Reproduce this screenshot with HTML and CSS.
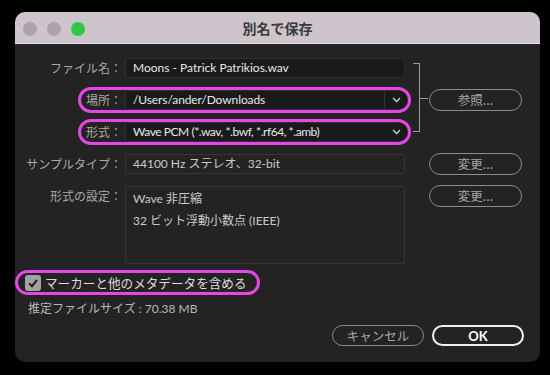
FILE: index.html
```html
<!DOCTYPE html>
<html lang="ja">
  <head>
    <meta charset="UTF-8" />
    <meta name="viewport" content="width=device-width, initial-scale=1.0" />
    <title>別名で保存</title>
    <link rel="stylesheet" href="styles.css">
  </head>
  <body>
    <div class="window">
      <div class="titlebar">
        <div class="lights">
          <span class="light"></span>
          <span class="light"></span>
          <span class="light green"></span>
        </div>
        <div class="title">別名で保存</div>
        <div></div>
      </div>
      <div class="content">
        <div class="form">
          <div class="label r1">ファイル名：</div>
          <div class="field input r1">Moons - Patrick Patrikios.wav</div>

          <div class="label r2">場所：</div>
          <div class="field select hl r2">
            <span class="value">/Users/ander/Downloads</span>
            <span class="chev split">
              <svg width="9" height="6" viewBox="0 0 9 6"><polyline points="1,1 4.5,4.5 8,1" /></svg>
            </span>
          </div>

          <div class="label r3">形式：</div>
          <div class="field select hl r3">
            <span class="value tight">Wave PCM (*.wav, *.bwf, *.rf64, *.amb)</span>
            <span class="chev">
              <svg width="9" height="6" viewBox="0 0 9 6"><polyline points="1,1 4.5,4.5 8,1" /></svg>
            </span>
          </div>

          <div class="bracket"></div>
          <button class="btn browse">参照...</button>

          <div class="label r4">サンプルタイプ：</div>
          <div class="field plain r4">44100 Hz ステレオ、32-bit</div>
          <button class="btn change1">変更...</button>

          <div class="label r5">形式の設定：</div>
          <div class="settings r5">
            <p>Wave 非圧縮</p>
            <p>32 ビット浮動小数点 (IEEE)</p>
          </div>
          <button class="btn change2">変更...</button>
        </div>

        <div class="check-row">
          <span class="checkbox">
            <svg width="12" height="12" viewBox="0 0 12 12"><polyline points="2.2,6.4 5,9.2 10,2.8" /></svg>
          </span>
          <span class="check-text">マーカーと他のメタデータを含める</span>
        </div>

        <p class="size">推定ファイルサイズ : 70.38 MB</p>

        <div class="actions">
          <button class="btn cancel">キャンセル</button>
          <button class="btn ok">OK</button>
        </div>
      </div>
    </div>
  </body>
</html>
```

FILE: styles.css
```css
* {
  margin: 0;
  padding: 0;
  box-sizing: border-box;
}
body {
  background: #000;
  font-family: Lato, "Noto Sans CJK JP", sans-serif;
  font-size: 12px;
  color: #b0b0b0;
}
.window {
  width: 525px;
  height: 350px;
  margin: 12px 0 0 15px;
  background: #232323;
  border-radius: 10px;
  overflow: hidden;
}
.titlebar {
  height: 32px;
  background: #cdc5cb;
  border-bottom: 1px solid #e6e0e4;
  display: grid;
  grid-template-columns: 1fr auto 1fr;
  align-items: center;
}
.lights {
  display: flex;
  gap: 10px;
  padding-left: 8px;
  padding-top: 2px;
}
.light {
  width: 14px;
  height: 14px;
  border-radius: 50%;
  background: #aba3a9;
}
.light.green {
  background: #2dc945;
}
.title {
  font-family: "Noto Sans CJK JP", sans-serif;
  font-weight: 700;
  font-size: 14px;
  color: #3a3a3a;
  padding-top: 1px;
}
.content {
  padding-top: 14px;
}
.form {
  display: grid;
  grid-template-columns: 110px 285px 19px 93px;
  grid-template-rows: 20px 20px 20px 20px 78px;
  row-gap: 12px;
}
.label {
  grid-column: 1;
  text-align: right;
  padding-right: 3px;
  line-height: 20px;
  color: #a8a8a8;
  font-family: "Noto Sans CJK JP", sans-serif;
}
.r1 { grid-row: 1; }
.r2 { grid-row: 2; }
.r3 { grid-row: 3; }
.r4 { grid-row: 4; }
.r5 { grid-row: 5; }
.field {
  grid-column: 2;
  height: 20px;
  line-height: 18px;
  padding-left: 7px;
  color: #e8e8e8;
  border: 1px solid #2e2e2e;
  border-radius: 2px;
  background: #1a1a1a;
  position: relative;
}
.field.input {
  width: 280px;
}
.field.plain {
  width: 280px;
  background: transparent;
  border-color: #363636;
  color: #cacaca;
}
.select {
  display: flex;
  margin-right: 1px;
}
.select .value {
  flex: 1;
  letter-spacing: -0.1px;
}
.select .value.tight {
  letter-spacing: -0.45px;
}
.chev {
  width: 24px;
  display: flex;
  align-items: center;
  justify-content: center;
}
.chev.split {
  border-left: 1px solid #333;
}
.chev svg polyline {
  fill: none;
  stroke: #d0d0d0;
  stroke-width: 1.3;
}
.hl::before {
  content: "";
  position: absolute;
  left: -48px;
  right: -3px;
  top: -4px;
  bottom: -4px;
  border: 3px solid #e646e8;
  border-radius: 14px;
}
.bracket {
  grid-column: 3;
  grid-row: 1 / 4;
  margin: 5px 9px 10px 3px;
  border: 1px solid #9a9a9a;
  border-left: 0;
  position: relative;
}
.bracket::after {
  content: "";
  position: absolute;
  right: -9px;
  top: 50%;
  width: 8px;
  border-top: 1px solid #9a9a9a;
}
.btn {
  height: 22px;
  border: 1.5px solid #8c8c8c;
  border-radius: 11px;
  background: transparent;
  color: #a8a8a8;
  font-family: "Noto Sans CJK JP", sans-serif;
  font-size: 12.5px;
  line-height: 18px;
}
.browse {
  grid-column: 4;
  grid-row: 2;
  align-self: center;
}
.change1 {
  grid-column: 4;
  grid-row: 4;
  align-self: center;
}
.change2 {
  grid-column: 4;
  grid-row: 5;
  align-self: start;
  margin-top: -1px;
}
.settings {
  grid-column: 2;
  width: 280px;
  border: 1px solid #363636;
  border-radius: 2px;
  padding: 1px 7px;
  line-height: 22px;
  color: #cacaca;
}
.check-row {
  position: relative;
  display: inline-flex;
  align-items: center;
  height: 19px;
  margin: 9px 0 0 3px;
  padding: 0 10px 0 7px;
}
.check-row::before {
  content: "";
  position: absolute;
  left: -3px;
  right: -3px;
  top: -3px;
  bottom: -3px;
  border: 3px solid #e646e8;
  border-radius: 13px;
}
.checkbox {
  width: 16px;
  height: 16px;
  border-radius: 3px;
  background: #a3a2a3;
  display: flex;
  align-items: center;
  justify-content: center;
}
.checkbox svg polyline {
  fill: none;
  stroke: #1c1c1c;
  stroke-width: 2;
}
.check-text {
  margin-left: 4px;
  font-family: "Noto Sans CJK JP", sans-serif;
  font-size: 12.6px;
  color: #dcdcdc;
}
.size {
  margin: 9px 0 0 13px;
  line-height: 16px;
  color: #b8b8b8;
}
.actions {
  display: flex;
  justify-content: flex-end;
  gap: 8px;
  padding-right: 16px;
  margin-top: 8px;
}
.cancel {
  width: 92px;
  height: 21px;
}
.ok {
  width: 92px;
  height: 21px;
  border: 2px solid #f0f0f0;
  color: #fff;
  font-family: Lato, sans-serif;
  font-weight: 700;
  font-size: 13px;
}
```
